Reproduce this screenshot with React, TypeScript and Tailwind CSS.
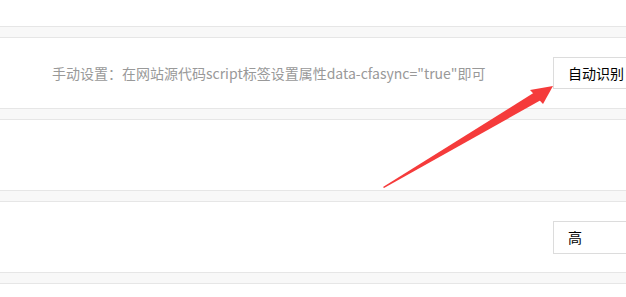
import React from "react";

const Band = () => (
  <div className="h-[12px] border-y border-[#e6e6e6] bg-[#f8f8f8]" />
);

export default function App() {
  const font = { fontFamily: '"Microsoft YaHei", "Noto Sans CJK SC", "Noto Sans", sans-serif' };
  return (
    <div className="relative w-[626px] h-[297px] overflow-hidden bg-white" style={font}>
      <div className="h-[26px]" />
      <Band />
      <div className="h-[70px] flex items-center justify-between pl-[52px]">
        <span className="text-[14px] text-[#999999] whitespace-nowrap">
          手动设置：在网站源代码script标签设置属性data-cfasync="true"即可
        </span>
        <div className="h-[32px] w-[90px] -mr-[17px] border border-[#dcdcdc] flex items-center pl-[14px] text-[14px] text-black whitespace-nowrap">
          自动识别
        </div>
      </div>
      <Band />
      <div className="h-[70px]" />
      <Band />
      <div className="h-[70px] flex items-center justify-end">
        <div className="h-[33px] w-[90px] -mr-[17px] border border-[#dcdcdc] flex items-center pl-[14px] text-[14px] text-black">
          高
        </div>
      </div>
      <Band />
      <svg className="absolute left-0 top-0" width="626" height="297" viewBox="0 0 626 297">
        <polygon points="383,187 535,92 541,100 384,188" fill="#f53b3b" />
        <polygon points="530,90 553,86 543,104" fill="#f53b3b" />
      </svg>
    </div>
  );
}
